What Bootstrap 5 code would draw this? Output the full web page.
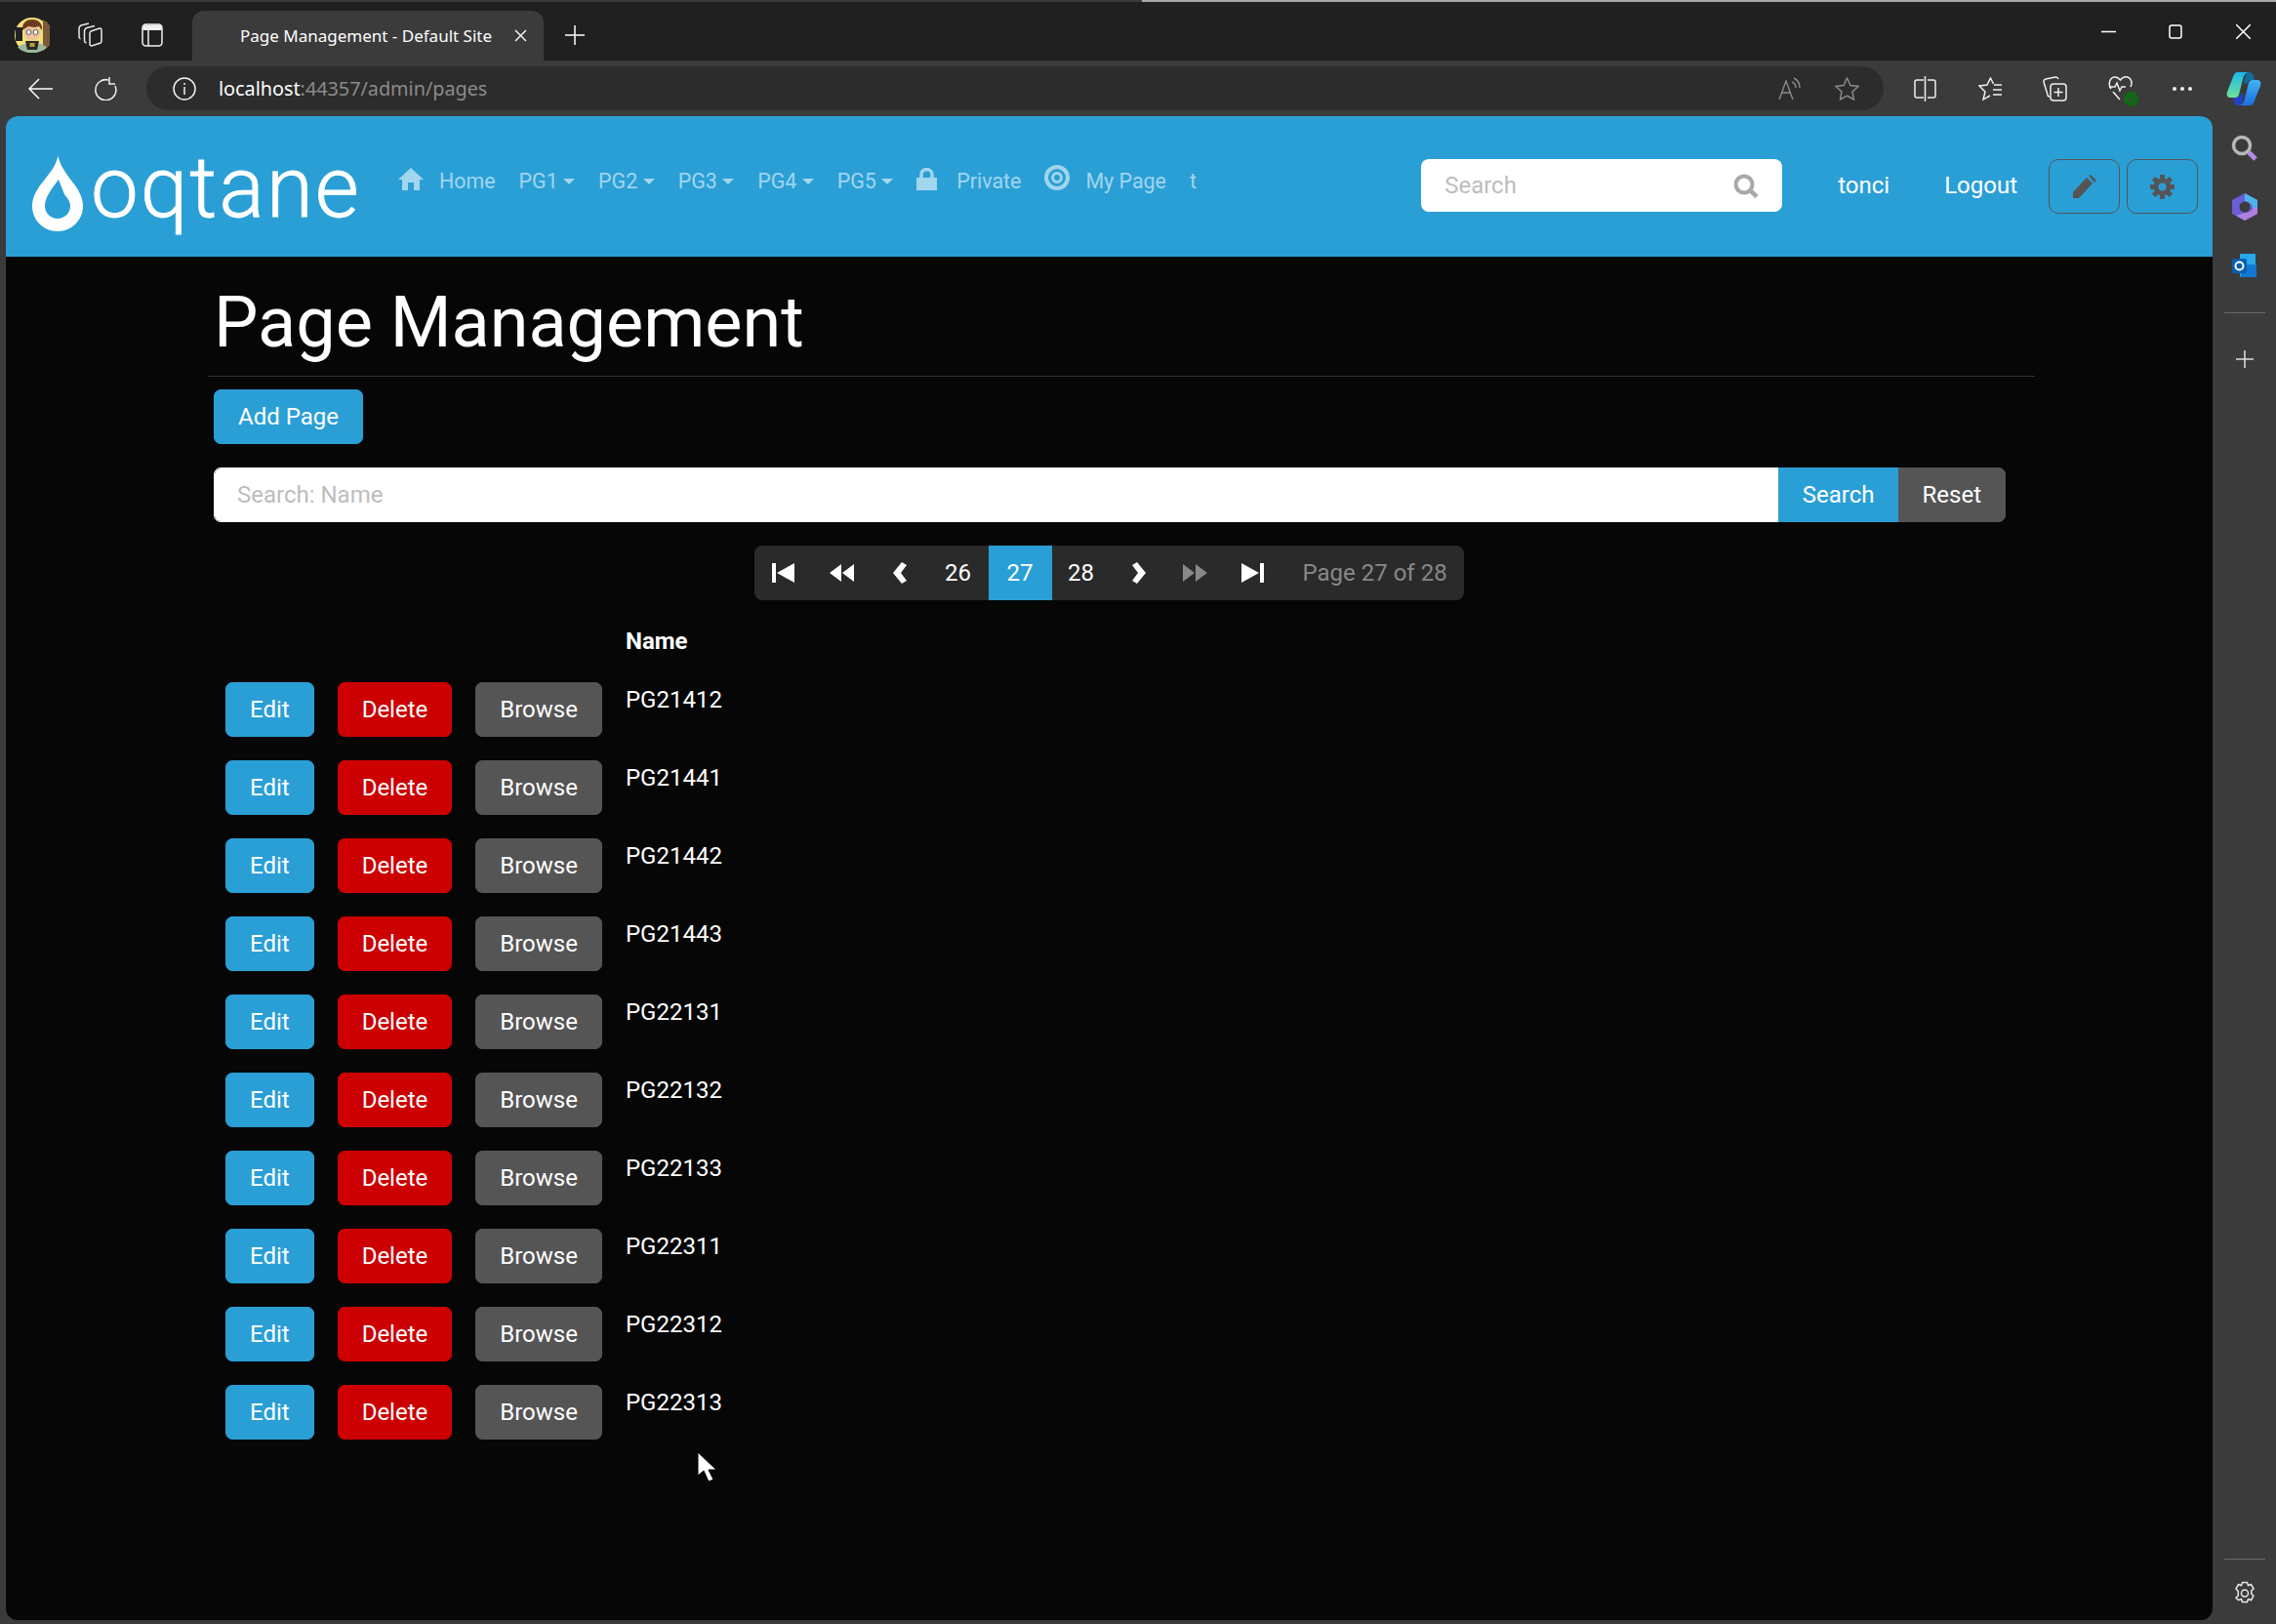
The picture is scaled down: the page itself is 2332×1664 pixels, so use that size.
<!DOCTYPE html>
<html lang="en">
<head>
    <meta charset="UTF-8">
    <meta name="viewport" content="width=device-width, initial-scale=1.0">
    <title>Page Management - Default Site</title>
    <link href="https://cdn.jsdelivr.net/npm/bootstrap@5.3.0/dist/css/bootstrap.min.css" rel="stylesheet">
    <style>
        html, body { height: 100%; }
        body {
            background-color: #3b3b3b;
            color: #fff;
            font-family: Roboto, "Liberation Sans", sans-serif;
            font-size: 24px;
            line-height: 36px;
            overflow: hidden;
            position: relative;
        }
        svg { display: block; flex-shrink: 0; }

        /* browser frame */
        .desk-strip { height: 2px; background: linear-gradient(90deg, #3b3b3b 1170px, #a9aab0 1170px); }
        .tab-row { height: 60px; background-color: #202020; padding-left: 15px; font-family: "Noto Sans", "Open Sans", sans-serif; }
        .tab-ico { margin-top: 7px; }
        .tab-box {
            width: 360px; height: 51px; margin-top: 9px; margin-left: 30px; padding-left: 49px;
            background-color: #3b3b3b; border-radius: 12px 12px 0 0; font-size: 17px; white-space: nowrap;
        }
        .tool-row { height: 57px; background-color: #3b3b3b; padding-left: 29px; font-family: "Noto Sans", "Open Sans", sans-serif; }
        .addr-bar {
            width: 1780px; height: 45px; margin-left: 30px; padding: 0 25px 0 27px;
            background-color: #2c2c2c; border-radius: 23px; font-size: 19.8px;
        }
        .addr-host { color: #fff; margin-left: 23px; }
        .addr-rest { color: #8b8b8b; }
        .side-rail { width: 65px; padding-top: 19px; padding-bottom: 15px; }
        .rail-line { width: 42px; height: 1px; background-color: #6a6a6a; }

        /* site */
        .frame-row { height: 1541px; }
        .frame-gap { width: 6px; }
        .site-wrap { width: 2261px; background-color: #060606; border-radius: 12px; overflow: hidden; }
        .site-bar { height: 144px; background-color: #2a9fd6; padding: 0 15px 0 27px; }
        .brand-box { width: 363px; margin-top: 30px; text-decoration: none; color: #fff; }
        .brand-drop { margin-top: 11px; margin-right: 8px; }
        .brand-word { font-size: 87px; font-weight: 300; line-height: 87px; letter-spacing: 2px; -webkit-text-stroke: 0.8px #fff; }
        .site-nav { margin-top: 51px; }
        .site-nav .nav-link {
            color: #a2d5ee; font-size: 21.4px; line-height: 31px; padding: 0 12px; display: flex; align-items: center;
        }
        .site-nav .nav-link svg { margin-right: 16px; margin-top: -4px; }
        .site-search {
            width: 370px; height: 54px; margin-top: 44px; padding: 0 24px; background-color: #fff; border-radius: 8px;
            color: #bdbdbd;
        }
        .user-link { color: #fff; text-decoration: none; margin-top: 53px; }
        .ctl-btn {
            width: 73px; height: 56px; margin-top: 44px; padding: 0; background: transparent;
            border: 1px solid #555; border-radius: 10px;
        }

        /* page content */
        .page-area { width: 1872px; margin-left: 207px; }
        .page-title { font-size: 72px; font-weight: 400; line-height: 82px; margin: 27px 0 0 6px; }
        .title-rule { height: 1px; background-color: #333; margin: 13px 0 13px 0; }
        .page-inner { width: 1836px; margin-left: 6px; }
        .btn { font-size: 24px; line-height: 36px; padding: 9px 24px; border-radius: 7px; }
        .btn-primary { --bs-btn-bg: #2a9fd6; --bs-btn-border-color: #2a9fd6; --bs-btn-color: #fff; }
        .btn-danger { --bs-btn-bg: #c00; --bs-btn-border-color: #c00; --bs-btn-color: #fff; }
        .btn-secondary { --bs-btn-bg: #555; --bs-btn-border-color: #555; --bs-btn-color: #fff; }
        .search-group { margin-top: 24px; }
        .search-group .form-control {
            font-size: 24px; line-height: 36px; padding: 9px 23px; border-radius: 7px 0 0 7px; border: 1px solid #fff; color: #333;
        }
        .search-group .form-control::placeholder { color: #bdbdbd; }
        .pager-box {
            height: 56px; background-color: #2a2a2a; border-radius: 8px; margin-top: 24px; margin-right: 2px; overflow: hidden;
        }
        .pager-cell { width: 60px; height: 56px; color: #fff; }
        .pager-now { width: 65px; background-color: #2a9fd6; }
        .pager-wide { width: 62px; }
        .pager-mid { width: 58px; }
        .pager-off { color: #888; }
        .pager-label { width: 186px; padding-left: 21px; color: #888; white-space: nowrap; }
        .page-table { margin: 12px 0 0 0; --bs-table-bg: transparent; --bs-table-color: #fff; color: #fff; }
        .page-table th, .page-table td { padding: 12px; line-height: 36px; vertical-align: top; }
        .page-table th { font-weight: 700; }

        .mouse-arrow { position: absolute; left: 713px; top: 1487px; }
    </style>
</head>
<body>
    <div class="desk-strip"></div>

    <!-- tab strip -->
    <div class="tab-row d-flex align-items-center">
        <svg class="tab-ico" width="36" height="36" viewBox="0 0 36 36">
            <circle cx="18" cy="18" r="18" fill="#f2e07a"/>
            <path d="M29 2a18 18 0 0 1 0 32z" fill="#7a5a3a"/>
            <rect x="1" y="10" width="7" height="14" fill="#222"/>
            <path d="M3 30c3 4 8 6 15 6s12-2 15-6l-6-3H9z" fill="#9db89a"/>
            <path d="M11 24h14l-2 9H13z" fill="#2a2a2a"/>
            <rect x="15.500" y="26" width="5" height="4" fill="#c89a30"/>
            <circle cx="18" cy="15" r="8.500" fill="#eec39a"/>
            <path d="M8 13C7 5 13 2 18 2s11 3 10 11l-3-4-5 1-6-1z" fill="#6e3a20"/>
            <circle cx="14.500" cy="15" r="2.500" fill="#fff" stroke="#555"/>
            <circle cx="21.500" cy="15" r="2.500" fill="#fff" stroke="#555"/>
        </svg>
        <svg class="tab-ico" style="margin-left:29px" width="25" height="25" viewBox="0 0 25 25" fill="none" stroke="#e8e8e8" stroke-width="1.500">
            <path d="M13 9l9-3q2 0 2 2v11q0 1-1 2l-9 3q-2 0-2-2V11q0-1 1-2z"/>
            <path d="M17 3.500L9 5.500Q6.500 6.500 6.500 9v10q0 1.500 2 2"/>
            <path d="M11 1L3 3Q1 4 1 6v9q0 1 1.500 2"/>
        </svg>
        <svg class="tab-ico" style="margin-left:40px" width="22" height="24" viewBox="0 0 22 24" fill="none" stroke="#f0f0f0" stroke-width="1.500">
            <rect x="1" y="1" width="20" height="22" rx="3.500"/>
            <path d="M1.500 7V4q0-2.500 3-2.500h13q3 0 3 2.500v3z" fill="#f0f0f0" stroke="none"/>
            <path d="M7 7v16"/>
        </svg>
        <div class="tab-box d-flex align-items-center">
            <span>Page Management - Default Site</span>
            <svg style="margin-left:23px" width="13" height="13" viewBox="0 0 13 13" stroke="#fff" stroke-width="1.400"><path d="M1 1l11 11M12 1L1 12"/></svg>
        </div>
        <svg class="tab-ico" style="margin-left:22px" width="20" height="20" viewBox="0 0 20 20" stroke="#fff" stroke-width="1.500"><path d="M10 0v20M0 10h20"/></svg>
        <div class="ms-auto d-flex align-items-center" style="padding-right:26px">
            <svg width="15" height="15" viewBox="0 0 15 15" stroke="#fff" stroke-width="1.500"><path d="M0 7.500h15"/></svg>
            <svg style="margin-left:54px" width="14" height="15" viewBox="0 0 14 15" fill="none" stroke="#fff" stroke-width="1.500"><rect x="1" y="1" width="12" height="13" rx="2"/></svg>
            <svg style="margin-left:55px" width="15" height="15" viewBox="0 0 15 15" stroke="#fff" stroke-width="1.500"><path d="M0 0l15 15M15 0L0 15"/></svg>
        </div>
    </div>

    <!-- address bar -->
    <div class="tool-row d-flex align-items-center">
        <svg width="25" height="22" viewBox="0 0 25 22" fill="none" stroke="#fff" stroke-width="1.500"><path d="M25 11H1M11 1L1 11l10 10"/></svg>
        <svg style="margin-left:42px" width="24" height="24" viewBox="0 0 24 24" fill="none" stroke="#f0f0f0" stroke-width="1.500"><path d="M15 3a10.500 10.500 0 1 0 7 6"/><path d="M16 0v7h6"/></svg>
        <div class="addr-bar d-flex align-items-center">
            <svg width="24" height="24" viewBox="0 0 24 24" fill="none" stroke="#f0f0f0" stroke-width="1.500"><circle cx="12" cy="12" r="11"/><path d="M12 10v8M12 6v2"/></svg>
            <span class="addr-host">localhost<span class="addr-rest">:44357/admin/pages</span></span>
            <svg class="ms-auto" width="23" height="24" viewBox="0 0 23 24" fill="none" stroke="#8b8b8b" stroke-width="1.400"><path d="M1 23L8 4l7 19M3.500 16h9"/><path d="M14 5c3 1 4 4 4 6M16 1c4 2 6 6 6 10"/></svg>
            <svg style="margin-left:35px" width="25" height="24" viewBox="0 0 25 24" fill="none" stroke="#8b8b8b" stroke-width="1.500"><path d="M12.500 1l3.500 7.500 8 1-6 5.500 1.500 8-7-4-7 4 1.500-8-6-5.500 8-1z"/></svg>
        </div>
        <svg style="margin-left:31px" width="23" height="26" viewBox="0 0 23 26" fill="none" stroke="#f0f0f0" stroke-width="1.500"><path d="M10 4H3a2 2 0 0 0-2 2v14a2 2 0 0 0 2 2h7M14 4h6a2 2 0 0 1 2 2v14a2 2 0 0 1-2 2h-6M11.500 0v26"/></svg>
        <svg style="margin-left:43px" width="25" height="24" viewBox="0 0 25 24" fill="none" stroke="#f0f0f0" stroke-width="1.500"><path d="M15.500 7L12.500 1 9 8 1 9l6 6-2 8 7-4"/><path d="M16 8h8M15 13h9M15 18h9"/></svg>
        <svg style="margin-left:41px" width="25" height="26" viewBox="0 0 25 26" fill="none" stroke="#f0f0f0" stroke-width="1.500"><path d="M7 21c-1 0-2-1-2-2L1 6c-.3-1.500.5-2.500 2-3l10-2c1.500-.2 2.500.3 3 2"/><rect x="8" y="8" width="16" height="17" rx="3"/><path d="M16 12v9M11.500 16.500h9"/></svg>
        <div style="margin-left:42px;position:relative">
            <svg width="26" height="27" viewBox="0 0 26 27" fill="none" stroke="#f0f0f0" stroke-width="1.500"><path d="M3 14C0 10 1 3 6 2c3-.5 5 1 6.500 3C14 3 17 1 20 2c4 1.500 5 6 3 10"/><path d="M1 12h6l2-4 3 8 2-4h4M5 17l7 8"/></svg>
            <svg style="position:absolute;right:-5px;bottom:-5px" width="15" height="15" viewBox="0 0 15 15"><circle cx="7.500" cy="7.500" r="7.500" fill="#0e6b14"/><path d="M4 7.500l2.500 2.500 4.500-5" fill="none" stroke="#3a4a3a" stroke-width="1.800"/></svg>
        </div>
        <svg style="margin-left:40px" width="20" height="4" viewBox="0 0 20 4" fill="#f0f0f0"><circle cx="2" cy="2" r="2"/><circle cx="10" cy="2" r="2"/><circle cx="18" cy="2" r="2"/></svg>
        <svg style="margin-left:35px" width="36" height="36" viewBox="0 0 36 36">
            <defs>
                <linearGradient id="cpA" x1="0" y1="0" x2="0" y2="1"><stop offset="0" stop-color="#1ab8e8"/><stop offset="1" stop-color="#6ee29a"/></linearGradient>
                <linearGradient id="cpB" x1="0" y1="0" x2="0" y2="1"><stop offset="0" stop-color="#3fb4f5"/><stop offset="1" stop-color="#1c6fe0"/></linearGradient>
            </defs>
            <path d="M24 1c3 0 4 3 5 8h-3c-3 0-4 1-5 4l-3-1 2-8c.5-2 2-3 4-3z" fill="#0e6e9c"/>
            <path d="M12 35c-3 0-4-3-5-8h3c3 0 4-1 5-4l3 1-2 8c-.5 2-2 3-4 3z" fill="#2340c8"/>
            <path d="M12 1H24C20 1 18 4 17 8L13 24C12 27 10 27 7 27H4C1 27 0 24 1 21L7 6C8 3 9 1 12 1z" fill="url(#cpA)"/>
            <path d="M24 35H12C16 35 18 32 19 28L23 12C24 9 26 9 29 9H32C35 9 36 12 35 15L29 30C28 33 27 35 24 35z" fill="url(#cpB)"/>
        </svg>
    </div>

    <div class="frame-row d-flex">
        <div class="frame-gap"></div>
        <div class="site-wrap">
            <!-- site navbar -->
            <nav class="site-bar d-flex align-items-start">
                <a class="brand-box d-flex align-items-start" href="#">
                    <svg class="brand-drop" width="52" height="77" viewBox="0 0 52 77">
                        <path fill="#fff" fill-rule="evenodd" d="M26.500 0C29 10 33 15 40 25 47 33 52 42 52 51 52 66 40 77 26 77 11 77 0 65 0 51 0 41 6 32 12 25 19 16 24 10 26.500 0zM27 24C22 31 13 41 13 51 13 58.500 19 64 26 64 33 64 39 58.500 39 51 39 46.500 36 43 33 39z"/>
                    </svg>
                    <span class="brand-word">oqtane</span>
                </a>
                <ul class="navbar-nav flex-row site-nav">
                    <li class="nav-item"><a class="nav-link" href="#">
                        <svg width="26" height="23" viewBox="0 0 26 23" fill="#a2d5ee"><path d="M13 0L0 12h4v11h6v-8h6v8h6V12h4z"/></svg>Home</a></li>
                    <li class="nav-item"><a class="nav-link dropdown-toggle" href="#">PG1</a></li>
                    <li class="nav-item"><a class="nav-link dropdown-toggle" href="#">PG2</a></li>
                    <li class="nav-item"><a class="nav-link dropdown-toggle" href="#">PG3</a></li>
                    <li class="nav-item"><a class="nav-link dropdown-toggle" href="#">PG4</a></li>
                    <li class="nav-item"><a class="nav-link dropdown-toggle" href="#">PG5</a></li>
                    <li class="nav-item"><a class="nav-link" href="#">
                        <svg style="margin-right:20px" width="21" height="23" viewBox="0 0 21 23" fill="#a2d5ee"><path d="M0 10h21v13H0z"/><path fill="none" stroke="#a2d5ee" stroke-width="3.500" d="M5 11V7a5.500 5.500 0 0 1 11 0v4"/></svg>Private</a></li>
                    <li class="nav-item"><a class="nav-link" href="#">
                        <svg style="margin-right:16px;margin-top:-7px" width="26" height="26" viewBox="0 0 26 26" fill="none" stroke="#a2d5ee"><circle cx="13" cy="13" r="11" stroke-width="4"/><circle cx="13" cy="13" r="4.500" fill="none" stroke-width="3"/></svg>My Page</a></li>
                    <li class="nav-item"><a class="nav-link" href="#">t</a></li>
                </ul>
                <div class="ms-auto d-flex align-items-start">
                    <div class="site-search d-flex align-items-center justify-content-between">
                        <span>Search</span>
                        <svg width="26" height="25" viewBox="0 0 26 25" fill="none" stroke="#a8a8a8"><circle cx="11" cy="11" r="8.500" stroke-width="4"/><path d="M17 17l7 6.500" stroke-width="4.500"/></svg>
                    </div>
                    <a class="user-link" style="margin-left:57px" href="#">tonci</a>
                    <a class="user-link" style="margin-left:56px" href="#">Logout</a>
                    <button class="ctl-btn d-flex align-items-center justify-content-center" style="margin-left:32px" type="button">
                        <svg width="24" height="24" viewBox="0 0 24 24" fill="#555"><path d="M0 24v-6L14 3l6 6L6 24z"/><path d="M16 1l2-1 6 6-2 2z"/></svg>
                    </button>
                    <button class="ctl-btn d-flex align-items-center justify-content-center" style="margin-left:7px" type="button">
                        <svg width="25" height="25" viewBox="0 0 25 25"><circle cx="12.500" cy="12.500" r="6.500" fill="none" stroke="#555" stroke-width="5"/><path stroke="#555" stroke-width="5" d="M12.500 0v5M12.500 20v5M0 12.500h5M20 12.500h5M3.700 3.700l3.500 3.500M17.800 17.800l3.500 3.500M21.300 3.700l-3.500 3.500M7.200 17.800l-3.500 3.500"/></svg>
                    </button>
                </div>
            </nav>

            <main class="page-area">
                <h1 class="page-title">Page Management</h1>
                <div class="title-rule"></div>
                <div class="page-inner">
                    <button class="btn btn-primary" type="button">Add Page</button>
                    <div class="input-group search-group">
                        <input type="text" class="form-control" placeholder="Search: Name">
                        <button class="btn btn-primary" type="button">Search</button>
                        <button class="btn btn-secondary" type="button">Reset</button>
                    </div>
                    <div class="d-flex justify-content-center">
                        <div class="pager-box d-flex" id="pager"></div>
                    </div>
                    <table class="table table-borderless page-table w-auto">
                        <thead><tr><th></th><th></th><th></th><th>Name</th></tr></thead>
                        <tbody id="pageRows"></tbody>
                    </table>
                </div>
            </main>
        </div>

        <!-- edge sidebar -->
        <aside class="side-rail d-flex flex-column align-items-center">
            <svg width="28" height="28" viewBox="0 0 28 28" fill="none"><circle cx="11" cy="11" r="8.500" stroke="#b8b8b8" stroke-width="3.500"/><path d="M18 18l7 7" stroke="#b48ae6" stroke-width="5"/></svg>
            <svg style="margin-top:32px" width="26" height="28" viewBox="0 0 26 28">
                <path d="M13 0l13 7v14l-13 7L0 21V7z" fill="#6b5ed6"/>
                <path d="M13 0l13 7v8h-5c0-3-3-7-8-7z" fill="#4cb4e8"/>
                <path d="M26 15v6l-13 7-9-5 9-3c4 0 8-2 8-5z" fill="#b07fe0"/>
                <circle cx="13" cy="14" r="5.500" fill="#3b3b3b"/>
            </svg>
            <svg style="margin-top:33px" width="26" height="26" viewBox="0 0 26 26">
                <path d="M8 1h16v24H8z" fill="#28a8ea"/>
                <path d="M14 12l11 0v13H8z" fill="#0f78d4"/>
                <rect x="0" y="6" width="15" height="15" rx="2" fill="#0a5fb0"/>
                <circle cx="7.500" cy="13.500" r="4" fill="none" stroke="#fff" stroke-width="2"/>
            </svg>
            <div class="rail-line" style="margin-top:35px"></div>
            <svg style="margin-top:38px" width="18" height="18" viewBox="0 0 18 18" stroke="#e0e0e0" stroke-width="1.500"><path d="M9 0v18M0 9h18"/></svg>
            <div class="rail-line mt-auto"></div>
            <svg style="margin-top:22px" width="24" height="25" viewBox="0 0 24 25" fill="none" stroke="#e8e8e8" stroke-width="1.500">
                <path d="M9.500 1.500h5l1 3 3-1 2.500 4.300-2.300 2.200.1 2-.1 1 2.300 2.200-2.500 4.300-3-1-1 3h-5l-1-3-3 1L3 17.200 5.300 15l-.1-2.500.1-2L3 7.800l2.500-4.300 3 1z"/>
                <circle cx="12" cy="12.500" r="3.500"/>
            </svg>
        </aside>
    </div>

    <svg class="mouse-arrow" width="24" height="34" viewBox="0 0 24 34"><path d="M2 1v24l6-5 5 11 5-2-5-10h8z" fill="#fff" stroke="#000"/></svg>

    <script>
        var pageNames = ["PG21412", "PG21441", "PG21442", "PG21443", "PG22131", "PG22132", "PG22133", "PG22311", "PG22312", "PG22313"];

        var rowsHTML = "";
        for (var i = 0; i < pageNames.length; i++) {
            rowsHTML += `<tr>
                <td><button class="btn btn-primary" type="button">Edit</button></td>
                <td><button class="btn btn-danger" type="button">Delete</button></td>
                <td><button class="btn btn-secondary" type="button">Browse</button></td>
                <td>${pageNames[i]}</td>
            </tr>`;
        }
        document.getElementById("pageRows").innerHTML = rowsHTML;

        // pager icons, all on the same 24 high box
        var pagerIcons = {
            first: '<path d="M0 2h4v20H0zM23 2v20L5 12z"/>',
            back: '<path d="M12 3v18L0 12zM25 3v18L13 12z"/>',
            prev: '<path d="M9 1l5 3-6 8 6 8-5 3-9-11z"/>',
            next: '<path d="M5 1l-5 3 6 8-6 8 5 3 9-11z"/>',
            fwd: '<path d="M0 3v18l12-9zM13 3v18l12-9z"/>',
            last: '<path d="M0 2v20l18-10zM19 2h4v20h-4z"/>'
        };

        function pagerIcon(name, width, cls) {
            return `<div class="pager-cell ${cls} d-flex align-items-center justify-content-center"><svg width="${width}" height="24" viewBox="0 0 ${width} 24" fill="currentColor">${pagerIcons[name]}</svg></div>`;
        }
        function pagerNum(text, cls) {
            return `<div class="pager-cell ${cls} d-flex align-items-center justify-content-center">${text}</div>`;
        }

        document.getElementById("pager").innerHTML =
            pagerIcon("first", 23, "") +
            pagerIcon("back", 25, "") +
            pagerIcon("prev", 14, "pager-mid") +
            pagerNum("26", "pager-wide") +
            pagerNum("27", "pager-now") +
            pagerNum("28", "") +
            pagerIcon("next", 14, "pager-mid") +
            pagerIcon("fwd", 25, "pager-mid pager-off") +
            pagerIcon("last", 23, "") +
            '<div class="pager-label d-flex align-items-center">Page 27 of 28</div>';
    </script>
    <script src="https://cdn.jsdelivr.net/npm/bootstrap@5.3.0/dist/js/bootstrap.bundle.min.js"></script>
</body>
</html>
